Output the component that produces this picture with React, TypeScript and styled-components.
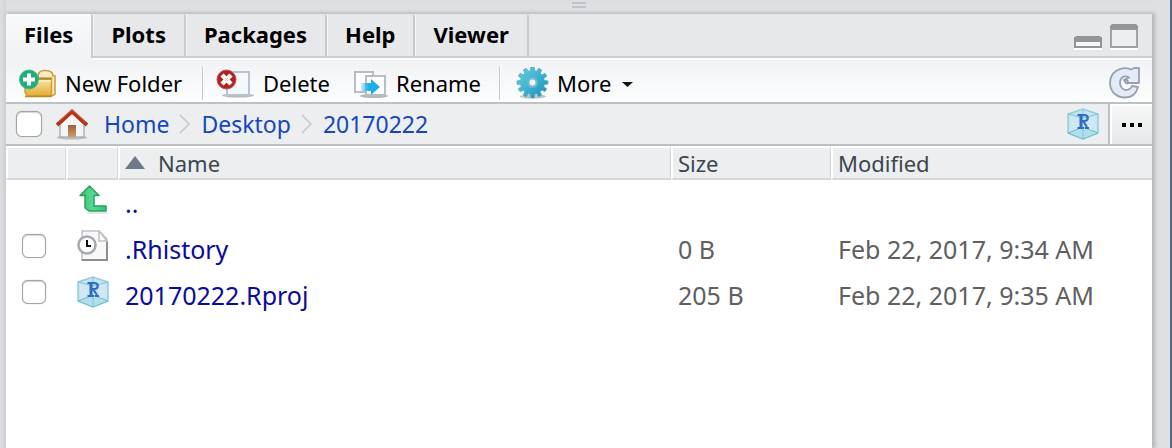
import React from "react";
import styled, { createGlobalStyle } from "styled-components";

const GlobalStyle = createGlobalStyle`
  *, *::before, *::after { box-sizing: border-box; }
  html, body, #root { height: 100%; }
  body {
    margin: 0;
    overflow: hidden;
    background: #dee0e4;
    font-family: "Noto Sans", "Open Sans", sans-serif;
    font-size: 22px;
    line-height: 32px;
    color: #000;
  }
  button { font: inherit; color: inherit; border: 0; padding: 0; background: none; }
  svg { display: block; flex: none; }
`;

const Workbench = styled.div`
  display: flex;
  flex-direction: column;
  height: 100%;
  border-right: 2px solid #4f6a86;
  padding: 0 18px 0 6px;
  background: linear-gradient(90deg, #dcdee1, #d2d4d8 6px, #dee0e4 7px);
`;

const Splitter = styled.div`
  flex: none;
  display: flex;
  flex-direction: column;
  align-items: center;
  gap: 2px;
  height: 14px;
  padding-top: 2px;
  background: linear-gradient(#dcdee2, #dfe1e5 10px, #d6d8db);
`;

const Grip = styled.span`
  width: 14px;
  height: 2px;
  background: #bfc3cb;
`;

const Pane = styled.section`
  flex: 1;
  display: flex;
  flex-direction: column;
  min-height: 0;
  background: #fff;
  box-shadow: 2px 0 4px 1px #b4b5b8;
`;

const TabBar = styled.div`
  display: flex;
  align-items: flex-start;
  height: 46px;
  background: linear-gradient(#e6e8ea 42px, #cbced1 42px, #cbced1 44px, #fff 44px);
`;

const Tab = styled.button<{ $active?: boolean }>`
  height: ${(p) => (p.$active ? "46px" : "42px")};
  padding: 0 20px ${(p) => (p.$active ? "6px" : "2px")} 18px;
  box-shadow: ${(p) => (p.$active ? "none" : "inset 1px 0 #f4f5f6")};
  border-top-right-radius: 3px;
  background:
    linear-gradient(#c9ccce, #c9ccce) right top / 2px 44px no-repeat,
    ${(p) => (p.$active ? "linear-gradient(#f8f9fa, #f0f2f4)" : "linear-gradient(#e6e8ea, #e6e8ea)")};
  font-weight: 700;
`;

const WindowButtons = styled.div`
  display: flex;
  align-items: center;
  gap: 8px;
  height: 42px;
  margin-left: auto;
  padding: 2px 14px 0 0;
`;

const Toolbar = styled.div`
  display: flex;
  align-items: center;
  height: 44px;
  padding: 4px 12px 0 12px;
  border-bottom: 2px solid #bcc2c5;
  background: linear-gradient(#f0f2f4, #fdfefe);
`;

const ToolButton = styled.button<{ $width?: number }>`
  display: flex;
  align-items: center;
  gap: 8px;
  width: ${(p) => (p.$width ? p.$width + "px" : "auto")};
  white-space: nowrap;
`;

const Divider = styled.span`
  width: 2px;
  height: 34px;
  margin-right: 12px;
  background: linear-gradient(90deg, #c6cacd 50%, #fff 50%);
`;

const Spacer = styled.span`
  flex: 1;
`;

const PathBar = styled.nav`
  display: flex;
  align-items: center;
  height: 42px;
  padding-left: 10px;
  border-bottom: 2px solid #bdbfc1;
  background: #eceef0;
  font-size: 23px;
`;

const CheckBox = styled.input<{ $size: number }>`
  appearance: none;
  display: block;
  flex: none;
  width: ${(p) => p.$size}px;
  height: ${(p) => p.$size}px;
  margin: 0;
  border: 1px solid #a4a4a4;
  border-radius: 6px;
  background: #fff;
  box-shadow: inset 0 1px 1px #d4d4d4, 0 0 1px #999;
`;

const HomeLink = styled.a`
  margin: 0 15px 0 13px;
`;

const Crumb = styled.a`
  color: #1446bd;
  text-decoration: none;
`;

const Chevron = styled.svg`
  margin: 0 10px;
`;

const ProjectButton = styled.button`
  display: grid;
  place-items: center;
  height: 40px;
  width: 52px;
  margin-left: auto;
  border-right: 2px solid #bcc2c5;
`;

const BrowseButton = styled.button`
  display: grid;
  place-items: center;
  height: 40px;
  width: 42px;
  border: 2px solid #fff;
  border-width: 2px 0 0 2px;
  background: linear-gradient(#f5f6f6, #e7e8e9);
`;

const FileTable = styled.table`
  width: 100%;
  table-layout: fixed;
  border-collapse: separate;
  border-spacing: 0;
`;

const HeadCell = styled.th<{ $width?: number; $last?: boolean }>`
  width: ${(p) => (p.$width ? p.$width + "px" : "auto")};
  height: 34px;
  padding: 0 0 0 5px;
  border: 2px solid #d5d8da;
  border-top-color: #fff;
  border-left-color: #fff;
  border-right-width: ${(p) => (p.$last ? 0 : "1px")};
  background: #eceef0;
  color: #3d464d;
  font-size: 22px;
  font-weight: 400;
  line-height: 28px;
  text-align: left;
`;

const SortLabel = styled.span`
  display: flex;
  align-items: center;
  gap: 13px;
`;

const Cell = styled.td<{ $muted?: boolean }>`
  height: 46px;
  padding: 0 0 0 7px;
  color: ${(p) => (p.$muted ? "#606060" : "#0a0a9c")};
  font-size: 25px;
  white-space: nowrap;
`;

const CheckCell = styled(Cell)`
  padding-left: 16px;
  padding-bottom: 6px;
`;

const IconCell = styled(Cell)`
  padding-left: 11px;
  padding-bottom: 6px;
`;

const FileLink = styled.a`
  color: #0a0a9c;
  text-decoration: none;
`;

const MinimizeIcon = () => (
  <svg width="28" height="30" viewBox="0 0 28 30">
    <path d="M0 28h28" stroke="#fff" strokeWidth="2" />
    <path d="M1 17h26v9H1z" fill="#f5f6f7" stroke="#929698" strokeWidth="2" />
    <path d="M2 15h24l2 2v4H0v-4z" fill="#929698" />
  </svg>
);

const MaximizeIcon = () => (
  <svg width="28" height="30" viewBox="0 0 28 30">
    <path d="M0 28h28" stroke="#fff" strokeWidth="2" />
    <path d="M1 6h26v20H1z" fill="#eceeef" stroke="#a0a3a5" strokeWidth="2" />
    <path d="M2 8h24" stroke="#fff" strokeWidth="2" />
    <path d="M2 3h24l2 2v4H0V5z" fill="#929698" />
  </svg>
);

const NewFolderIcon = () => (
  <svg width="39" height="30" viewBox="0 -1 39 30">
    <defs>
      <linearGradient id="folder" x2="0" y2="1">
        <stop stopColor="#fbe8a8" />
        <stop offset="1" stopColor="#e4ab35" />
      </linearGradient>
    </defs>
    <path d="M20 9c0-6 2-7.500 7-7.500 5.500 0 8 2 8 5.500h2v18l-3 2H19z" fill="#f8ecca" stroke="#c99a35" strokeWidth="1.500" />
    <path d="M7 9h26.500v18H9l-2-4z" fill="url(#folder)" stroke="#cf9d36" strokeWidth="1.500" />
    <path d="M20 10h13" stroke="#a87d24" strokeWidth="1.500" />
    <path d="M8 12h25" stroke="#fff0bd" strokeWidth="1.500" />
    <path d="M7 27.500h26" stroke="#b58a29" strokeWidth="1.500" />
    <circle cx="11" cy="10.500" r="9.500" fill="#1fad7d" stroke="#43b58f" />
    <path d="M11 4.500v12M5 10.500h12" stroke="#fff" strokeWidth="4" />
  </svg>
);

const DeleteIcon = () => (
  <svg width="39" height="30" viewBox="0 -1 39 30">
    <ellipse cx="22" cy="26.500" rx="16" ry="2" fill="#8f99a0" opacity=".65" />
    <path d="M11 3h22v23H11z" fill="#f5f8fb" stroke="#b9c2ce" strokeWidth="2" />
    <circle cx="10.500" cy="10.500" r="9.500" fill="#b6201f" stroke="#b75554" />
    <path d="M6 6l9 9M15 6l-9 9" stroke="#fff" strokeWidth="4.500" />
    <path d="M9 9l3 3M12 9l-3 3" stroke="#e8b5b4" />
  </svg>
);

const RenameIcon = () => (
  <svg width="35" height="30" viewBox="-1 -1 35 30">
    <defs>
      <linearGradient id="arrow">
        <stop stopColor="#43c5f0" stopOpacity=".3" />
        <stop offset=".4" stopColor="#1fadec" />
      </linearGradient>
    </defs>
    <ellipse cx="20" cy="27" rx="14" ry="2" fill="#89939b" opacity=".65" />
    <path d="M1 3h18v20H1z" fill="#fff" stroke="#b5bdc6" strokeWidth="2" />
    <path d="M12 7h19v19H12z" fill="#fff" stroke="#b5bdc6" strokeWidth="2" />
    <path d="M7 14h10v-4l9 8-9 8v-4H7z" fill="url(#arrow)" />
  </svg>
);

const TEETH = 12;
const gearPoints = Array.from({ length: TEETH }, (_, i) =>
  [
    [-0.32, 12],
    [-0.2, 15.5],
    [0.2, 15.5],
    [0.32, 12],
  ].map(([turn, radius]) => {
    const angle = ((i + turn) / TEETH) * 2 * Math.PI;
    return `${(16.5 + radius * Math.sin(angle)).toFixed(2)},${(15.5 - radius * Math.cos(angle)).toFixed(2)}`;
  }).join(" ")
).join(" ");

const GearIcon = () => (
  <svg width="36" height="32" viewBox="-3 0 36 32">
    <defs>
      <linearGradient id="gear" x2="1" y2="1">
        <stop stopColor="#6ad0e2" />
        <stop offset=".55" stopColor="#39aed0" />
        <stop offset="1" stopColor="#2686ab" />
      </linearGradient>
    </defs>
    <ellipse cx="17" cy="29.500" rx="13" ry="2" fill="#83939b" opacity=".55" />
    <polygon points={gearPoints} fill="url(#gear)" stroke="#4aa9c2" strokeWidth=".8" />
    <circle cx="16.500" cy="15.500" r="5.500" fill="#62bdd2" />
    <circle cx="16.500" cy="15.500" r="3.500" fill="#f0f5f6" stroke="#90bcc8" />
  </svg>
);

const CaretIcon = () => (
  <svg width="14" height="8" viewBox="0 0 14 8">
    <path d="M3 3h11L8.500 8z" fill="#111" />
  </svg>
);

const RefreshIcon = () => (
  <svg width="32" height="32" viewBox="-1 1 32 32">
    <path
      d="M22 3.500l3-1.500h5v15H17l-2-3 5-2.500c-5-3-9 .5-9 5.500 0 4 3 7 6 7 3.500 0 5-1.500 6-4l6 1c-1.500 6-6 10.500-13 10.500C7 31.500 1 25 1 17 1 7 11-1 22 3.500z"
      fill="#e3ebf7"
      stroke="#98a1b1"
      strokeWidth="1.800"
      strokeLinejoin="round"
    />
    <path d="M15 14c3-1 5 1 3 4" fill="none" stroke="#929cad" strokeWidth="1.800" />
  </svg>
);

const HomeIcon = () => (
  <svg width="34" height="32" viewBox="0 0 34 32">
    <defs>
      <linearGradient id="door" x2="0" y2="1">
        <stop stopColor="#9c6337" />
        <stop offset="1" stopColor="#d29a6d" />
      </linearGradient>
    </defs>
    <ellipse cx="17" cy="29.500" rx="15" ry="2" fill="#929aa0" opacity=".6" />
    <path d="M5 16L17 4l12 12v13H5z" fill="#f4f5f6" stroke="#a9b2ba" strokeWidth="1.500" />
    <path d="M13 17h8v12h-8z" fill="url(#door)" />
    <path d="M2 17L17 3.500 32 17" fill="none" stroke="#b92f14" strokeWidth="3.800" />
    <path d="M3 14.500L17 2l14 12.500" fill="none" stroke="#c8663f" strokeWidth="1" />
  </svg>
);

const ProjectIcon = () => (
  <svg width="32" height="32" viewBox="0 0 32 32">
    <path d="M1 6l15-5 15 5v19l-15 6-15-6z" fill="#c6e4ef" stroke="#93cedd" strokeWidth="1.500" />
    <path d="M1 25l15-6 15 6-15 6z" fill="#b0dfeb" stroke="#6fbdcd" />
    <path d="M1 6l15 4 15-4M16 1v30" fill="none" stroke="#7fc6d5" />
    <path d="M3 8l13 3v8L3 23zM29 8l-13 3v8l13 4z" fill="#d4e9f5" opacity=".7" />
    <g fill="none" stroke="#2c6cc5">
      <path d="M14 7v13" strokeWidth="3" />
      <path d="M10.500 7H17c5 0 5 6 0 6h-3M16 13l4 6" strokeWidth="2.200" />
      <path d="M10.500 20H17M18 20h4" strokeWidth="2" />
    </g>
  </svg>
);

const ParentIcon = () => (
  <svg width="32" height="32" viewBox="0 0 32 32">
    <defs>
      <linearGradient id="up" x2="1">
        <stop stopColor="#36b970" />
        <stop offset=".5" stopColor="#59d998" />
        <stop offset="1" stopColor="#32bf78" />
      </linearGradient>
    </defs>
    <path d="M10 29h20" stroke="#e3e6e4" strokeWidth="2" />
    <path d="M3 11.500L12.500 2 22 11.500h-5V22h12v5H12l-4-3V11.500z" fill="url(#up)" stroke="#24a45f" strokeWidth="1.500" strokeLinejoin="round" />
  </svg>
);

const HistoryIcon = () => (
  <svg width="32" height="32" viewBox="0 0 32 32">
    <path d="M5 1h17l8 8v21H5z" fill="#f8f8f8" stroke="#bfc1c3" strokeWidth="1.500" />
    <path d="M5 30h25V11" fill="none" stroke="#8c8f91" strokeWidth="2" />
    <path d="M22 1v10h8z" fill="#fff" stroke="#bfc1c3" strokeWidth="1.500" />
    <circle cx="10" cy="15" r="8.500" fill="#fff" stroke="#a4a9b2" strokeWidth="2.500" />
    <path d="M10 10v6h4" fill="none" stroke="#111" strokeWidth="2" />
  </svg>
);

const CrumbChevron = () => (
  <Chevron width="12" height="20" viewBox="0 0 12 20">
    <path d="M1 1l9 9-9 9" fill="none" stroke="#c6c9cc" strokeWidth="1.500" />
  </Chevron>
);

const files = [
  { name: "..", icon: <ParentIcon /> },
  { name: ".Rhistory", icon: <HistoryIcon />, size: "0 B", modified: "Feb 22, 2017, 9:34 AM" },
  { name: "20170222.Rproj", icon: <ProjectIcon />, size: "205 B", modified: "Feb 22, 2017, 9:35 AM" },
];

export default function App() {
  return (
    <>
      <GlobalStyle />
      <Workbench>
        <Splitter>
          <Grip />
          <Grip />
        </Splitter>
        <Pane>
          <TabBar role="tablist">
            {["Files", "Plots", "Packages", "Help", "Viewer"].map((name, i) => (
              <Tab key={name} role="tab" aria-selected={i === 0} $active={i === 0}>
                {name}
              </Tab>
            ))}
            <WindowButtons>
              <button aria-label="Minimize"><MinimizeIcon /></button>
              <button aria-label="Maximize"><MaximizeIcon /></button>
            </WindowButtons>
          </TabBar>
          <Toolbar>
            <ToolButton $width={184}><NewFolderIcon />New Folder</ToolButton>
            <Divider />
            <ToolButton $width={137}><DeleteIcon />Delete</ToolButton>
            <ToolButton $width={146}><RenameIcon />Rename</ToolButton>
            <Divider />
            <ToolButton><GearIcon />More <CaretIcon /></ToolButton>
            <Spacer />
            <button aria-label="Refresh"><RefreshIcon /></button>
          </Toolbar>
          <PathBar aria-label="Folder path">
            <CheckBox type="checkbox" aria-label="Select all files" $size={26} />
            <HomeLink href="#home" aria-label="Home folder"><HomeIcon /></HomeLink>
            <Crumb href="#home">Home</Crumb>
            <CrumbChevron />
            <Crumb href="#desktop">Desktop</Crumb>
            <CrumbChevron />
            <Crumb href="#20170222">20170222</Crumb>
            <ProjectButton aria-label="Project folder"><ProjectIcon /></ProjectButton>
            <BrowseButton aria-label="Browse">
              <svg width="20" height="4" viewBox="0 0 20 4">
                <path d="M0 0h4v4H0zM8 0h4v4H8zM16 0h4v4h-4z" />
              </svg>
            </BrowseButton>
          </PathBar>
          <FileTable>
            <thead>
              <tr>
                <HeadCell $width={60} aria-label="Selected" />
                <HeadCell $width={52} aria-label="Type" />
                <HeadCell aria-sort="ascending">
                  <SortLabel>
                    <svg width="20" height="14" viewBox="0 0 20 14">
                      <path d="M0 13L10 0l10 13z" fill="#6c7a88" />
                    </svg>
                    Name
                  </SortLabel>
                </HeadCell>
                <HeadCell $width={160}>Size</HeadCell>
                <HeadCell $width={321} $last>Modified</HeadCell>
              </tr>
            </thead>
            <tbody>
              {files.map((file) => (
                <tr key={file.name}>
                  <CheckCell>
                    {file.size && <CheckBox type="checkbox" aria-label={"Select " + file.name} $size={24} />}
                  </CheckCell>
                  <IconCell>{file.icon}</IconCell>
                  <Cell><FileLink href={"#" + file.name}>{file.name}</FileLink></Cell>
                  <Cell $muted>{file.size}</Cell>
                  <Cell $muted>{file.modified}</Cell>
                </tr>
              ))}
            </tbody>
          </FileTable>
        </Pane>
      </Workbench>
    </>
  );
}
